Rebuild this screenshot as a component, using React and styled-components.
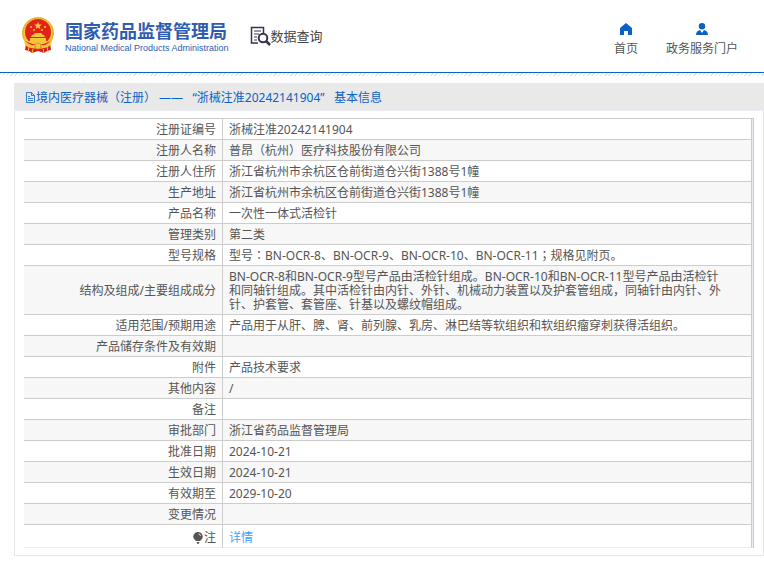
import styled, { createGlobalStyle } from 'styled-components'

const GlobalStyle = createGlobalStyle`
  * {
    box-sizing: border-box;
  }

  body {
    margin: 0;
    background: #fff;
    color: #555;
    font-family: 'Noto Sans', 'Noto Sans CJK SC', sans-serif;
    font-size: 12px;
    line-height: 14px;
  }

  svg {
    display: block;
    flex: none;
  }
`

const Header = styled.header`
  display: flex;
  justify-content: space-between;
  height: 73px;
  padding: 16px 26px 0 21px;
  border-bottom: 1px solid #0a62c4;
`

const HeaderShade = styled.div`
  height: 3px;
  margin-bottom: 7px;
  background: repeating-linear-gradient(135deg, #e4e4e4 0 1px, #fff 1px 3px);
`

const Brand = styled.div`
  display: flex;
  align-items: flex-start;
`

const BrandLink = styled.a`
  display: flex;
  gap: 10px;
  color: #2e5db0;
  text-decoration: none;
`

const BrandName = styled.span`
  display: block;
  padding-top: 3px;
  font-family: 'Noto Sans CJK SC', sans-serif;
  font-size: 18px;
  font-weight: 700;
  line-height: 22px;
`

const BrandSub = styled.span`
  display: block;
  font-family: 'Liberation Sans', sans-serif;
  font-size: 9px;
  line-height: 14px;
`

const Query = styled.a`
  display: flex;
  align-items: center;
  margin: 10px 0 0 21px;
  color: #444;
  font-size: 13px;
  line-height: 20px;
  text-decoration: none;
`

const Nav = styled.nav`
  display: flex;
  align-items: flex-start;
  gap: 28px;
  padding-top: 6px;
`

const NavLink = styled.a`
  display: flex;
  flex-direction: column;
  align-items: center;
  gap: 6px;
  color: #555;
  text-decoration: none;

  svg {
    color: #0a62c4;
  }
`

const Panel = styled.main`
  margin-left: 14px;
  border: 1px solid #e6e6e6;
  border-top: none;
`

const PanelTitle = styled.h1`
  display: flex;
  align-items: center;
  height: 28px;
  margin: 0 -1px;
  padding: 2px 11px 0;
  border-bottom: 1px solid #ececf4;
  background: #e9e9e9;
  color: #0a62c4;
  font-size: 12px;
  font-weight: 400;
  white-space: pre;
`

const TableWrap = styled.div`
  padding: 7px 9px;
`

const Table = styled.table`
  width: 100%;
  border-top: 1px solid #ccc;
  border-right: 1px solid #c8c8d4;
  border-spacing: 0;
  border-collapse: separate;
  padding-right: 1px;
  background: #ececf4;
`

const Row = styled.tr`
  background: #fff;

  &:nth-child(even) {
    background: #f7f7f7;
  }

  &:last-child > * {
    height: 23px;
    padding-top: 6px;
    border-bottom-color: #ececf4;
  }
`

const Label = styled.th`
  width: 199px;
  height: 21px;
  padding: 4px 6px 2px;
  border-right: 1px solid #ccc;
  border-bottom: 1px solid #ccc;
  font-weight: 400;
  text-align: right;
`

const Value = styled.td`
  padding: 4px 6px 2px;
  border-right: 1px solid #ccc;
  border-bottom: 1px solid #ccc;
  white-space: pre-line;
`

// centred full-width punctuation
const Punct = styled.span`
  font-family: 'Noto Sans CJK TC', sans-serif;
  line-height: 1;
`

const NoteLabel = styled.span`
  display: flex;
  align-items: center;
  justify-content: flex-end;
`

const DetailLink = styled.a`
  color: #409eff;
  text-decoration: none;
`

const Emblem = () => (
  <svg width="34" height="38" viewBox="0 0 34 38" aria-hidden="true">
    <path d="M5 27l-1 7 4 1 3 2 6-2 6 2 3-2 4-1-1-7z" fill="#dd1c1a" />
    <circle cx="17" cy="17" r="16" fill="#f3c63c" />
    <circle cx="17" cy="17" r="15" fill="none" stroke="#dca024" strokeDasharray="2 1" />
    <circle cx="17" cy="16" r="13" fill="#e2231a" />
    <path d="M17 6l1 2.600h2.800l-2.200 1.700.8 2.700-2.400-1.600-2.400 1.600.8-2.700-2.200-1.700H16z" fill="#f7cf45" />
    <g fill="#f3c63c">
      <circle cx="10" cy="11" r="1" />
      <circle cx="24" cy="11" r="1" />
      <circle cx="13" cy="14" r="1" />
      <circle cx="21" cy="14" r="1" />
      <path d="M12 19l2-2h6l2 2zM10 21l1-2h12l1 2zM9 22h16v3H9zM6 25h22l-2 4H8z" />
    </g>
    <path d="M4 25q13 7 26 0l-1 5q-12 5-24 0z" fill="#e2231a" />
    <path d="M3 23q5 7 10 6l4-2 4 2q5 1 10-6l-1 6q-5 4-9 3l-4-2-4 2q-5 1-9-3z" fill="#f3c63c" />
    <circle cx="17" cy="30" r="3" fill="#f3c63c" stroke="#d99820" />
    <path d="M8 31l-1 5M26 31l1 5M12 33l-1 4M22 33l1 4" stroke="#f3c63c" />
  </svg>
)

const QueryIcon = () => (
  <svg width="21" height="20" viewBox="0 0 21 20" fill="none" stroke="#34344c" aria-hidden="true">
    <path d="M8 17H1.500V1.500h12V7" strokeWidth="1.500" />
    <path d="M4 5h7M4 8h5M4 11h3M4 14h3" />
    <circle cx="13" cy="12" r="4.300" strokeWidth="2" />
    <path d="M16 15l4 4" strokeWidth="2.500" />
  </svg>
)

const HomeIcon = () => (
  <svg width="14" height="14" viewBox="0 0 14 14" fill="currentColor" aria-hidden="true">
    <path d="M7 1l6 5v7H9V9H5v4H1V6z" />
  </svg>
)

const UserIcon = () => (
  <svg width="14" height="14" viewBox="0 0 14 14" fill="currentColor" aria-hidden="true">
    <circle cx="7" cy="4.200" r="3.200" />
    <path d="M1 13q0-4 4-5l2 3 2-3q4 1 4 5z" />
  </svg>
)

const DocIcon = () => (
  <svg width="11" height="12" viewBox="0 0 11 12" fill="none" stroke="currentColor" aria-hidden="true">
    <path d="M1.500.500h5l3 3v7h-8zM6.500.500v3h3M3 4.500h2M3 6.500h5M3 8.500h5" strokeWidth=".8" />
  </svg>
)

const BulbIcon = () => (
  <svg width="12" height="12" viewBox="0 0 12 12" aria-hidden="true">
    <path d="M6 0a4.500 4.500 0 0 1 3 8l-1 1H4L3 8A4.500 4.500 0 0 1 6 0zM4.500 10h3l-1 2h-1z" fill="#555" />
    <path d="M6.500 1.800q2 .5 2 2.200" fill="none" stroke="#fff" strokeWidth=".8" />
  </svg>
)

const rows = [
  ['注册证编号', '浙械注准20242141904'],
  ['注册人名称', '普昂（杭州）医疗科技股份有限公司'],
  ['注册人住所', '浙江省杭州市余杭区仓前街道仓兴街1388号1幢'],
  ['生产地址', '浙江省杭州市余杭区仓前街道仓兴街1388号1幢'],
  ['产品名称', '一次性一体式活检针'],
  ['管理类别', '第二类'],
  ['型号规格', '型号：BN-OCR-8、BN-OCR-9、BN-OCR-10、BN-OCR-11；规格见附页。'],
  [
    '结构及组成/主要组成成分',
    'BN-OCR-8和BN-OCR-9型号产品由活检针组成。BN-OCR-10和BN-OCR-11型号产品由活检针\n和同轴针组成。其中活检针由内针、外针、机械动力装置以及护套管组成，同轴针由内针、外\n针、护套管、套管座、针基以及螺纹帽组成。',
  ],
  ['适用范围/预期用途', '产品用于从肝、脾、肾、前列腺、乳房、淋巴结等软组织和软组织瘤穿刺获得活组织。'],
  ['产品储存条件及有效期', ''],
  ['附件', '产品技术要求'],
  ['其他内容', '/'],
  ['备注', ''],
  ['审批部门', '浙江省药品监督管理局'],
  ['批准日期', '2024-10-21'],
  ['生效日期', '2024-10-21'],
  ['有效期至', '2029-10-20'],
  ['变更情况', ''],
]

const withPunct = (text) =>
  text.split(/([：；])/).map((part, i) => (i % 2 ? <Punct key={i}>{part}</Punct> : part))

export default () => {
  return (
    <>
      <GlobalStyle />
      <Header>
        <Brand>
          <BrandLink href="#">
            <Emblem />
            <span>
              <BrandName>国家药品监督管理局</BrandName>
              <BrandSub>National Medical Products Administration</BrandSub>
            </span>
          </BrandLink>
          <Query href="#">
            <QueryIcon />
            数据查询
          </Query>
        </Brand>
        <Nav>
          <NavLink href="#">
            <HomeIcon />
            首页
          </NavLink>
          <NavLink href="#">
            <UserIcon />
            政务服务门户
          </NavLink>
        </Nav>
      </Header>
      <HeaderShade />
      <Panel>
        <PanelTitle>
          <DocIcon />
          境内医疗器械（注册） ——   “浙械注准20242141904”   基本信息
        </PanelTitle>
        <TableWrap>
          <Table>
            <tbody>
              {rows.map(([label, value]) => (
                <Row key={label}>
                  <Label scope="row">{label}</Label>
                  <Value>{withPunct(value)}</Value>
                </Row>
              ))}
              <Row>
                <Label scope="row">
                  <NoteLabel>
                    <BulbIcon />注
                  </NoteLabel>
                </Label>
                <Value>
                  <DetailLink href="#">详情</DetailLink>
                </Value>
              </Row>
            </tbody>
          </Table>
        </TableWrap>
      </Panel>
    </>
  )
}
